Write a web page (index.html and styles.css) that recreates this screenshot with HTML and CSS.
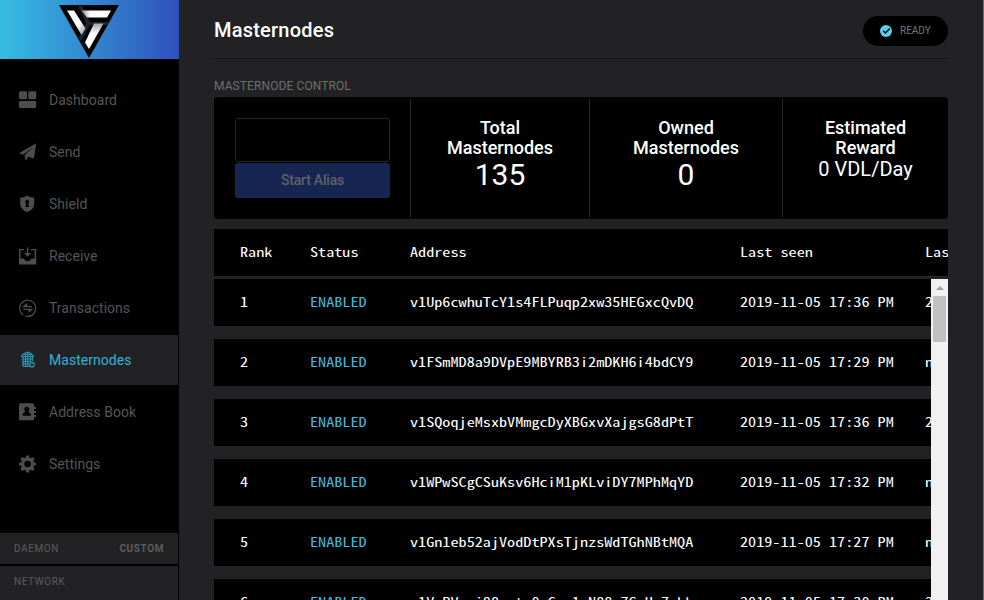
FILE: index.html
```html
<!DOCTYPE html>
<html lang="en">
<head>
<meta charset="utf-8">
<title>Masternodes</title>
<link rel="stylesheet" href="styles.css">
</head>
<body>
<div class="app">
  <aside class="sidebar">
    <div class="brand">
      <svg width="60" height="54" viewBox="0 0 60 54">
        <defs>
          <linearGradient id="g1" x1="0" y1="0" x2="1" y2="1"><stop offset=".6" stop-color="#fff"/><stop offset="1" stop-color="#8b8f98"/></linearGradient>
          <linearGradient id="g2" x1="0" y1="0" x2="1" y2="0"><stop offset="0" stop-color="#8b8f98"/><stop offset=".3" stop-color="#fff"/></linearGradient>
          <linearGradient id="g3" x1="0" y1="1" x2="0" y2="0"><stop offset=".6" stop-color="#fff"/><stop offset="1" stop-color="#a0a3aa"/></linearGradient>
        </defs>
        <path d="M0 0H60L30 53Z" fill="#030304"/>
        <path d="M19 1H23L31 17H50L48 20H31L22 36L20 32L27 18Z" fill="#20222c"/>
        <path d="M8 5.500H15L26.500 23.500L22.500 30Z" fill="url(#g1)"/>
        <path d="M22.500 5.500H52L48 12.500H28Z" fill="url(#g2)"/>
        <path d="M35 18.500H44.500L30 44L26 37.500Z" fill="url(#g3)"/>
      </svg>
    </div>
    <nav class="nav">
      <a class="item"><svg class="ico" viewBox="0 0 18 18"><rect x="0" y=".3" width="8" height="8" rx="1.300"/><rect x="9.200" y=".3" width="8" height="8" rx="1.300"/><rect x="0" y="10" width="17.200" height="7" rx="1.300"/></svg>Dashboard</a>
      <a class="item"><svg class="ico" viewBox="0 0 18 18"><path d="M17.300 .3L14.800 15.500L9.400 13.500L6.600 17.700L5.600 12.300L14.500 3.800L4.200 11.700L0 10.300Z"/></svg>Send</a>
      <a class="item"><svg class="ico" viewBox="0 0 18 18"><path fill-rule="evenodd" d="M8.200 .7C10.500 2 12.800 2.500 15.200 2.500V8.500C15.200 12.800 12.500 15.500 8.200 17C4 15.500 1.200 12.800 1.200 8.500V2.500C3.600 2.500 5.900 2 8.200 .7ZM8.200 4.800A2 2 0 0 0 7 8.400L6.500 12H9.900L9.400 8.400A2 2 0 0 0 8.200 4.800Z"/></svg>Shield</a>
      <a class="item"><svg class="ico" viewBox="0 0 18 18"><path d="M0 2H5V3.300H1.500V11.500H5.200C5.200 15 12 15 12 11.500H15.700V3.300H12V2H17.200V17.500H0Z"/><path d="M7.900 .5H9.300V6H12.200L8.600 9.800L5 6H7.900Z"/></svg>Receive</a>
      <a class="item"><svg class="ico line" viewBox="0 0 18 18"><path d="M4.500 16A8 8 0 1 1 9 17.200M14.800 14.800A8 8 0 0 1 6 17" stroke-width="1.200"/><path d="M13 7.700H4.300L7.400 5.200V7.700M4.300 10.300H13L10 12.800V10.300" stroke-width="1.200"/></svg>Transactions</a>
      <a class="item active"><svg class="ico line" viewBox="0 0 18 18"><path d="M2.500 5L5 2.500L8.500 1.200L12 2.500L14.500 5M2 5.500H15M4 3.500H13M4 5V15.500M6.500 4V16M8.700 1V16M11.300 4V11M13.500 5V10M3 8H14M3 10.500H12M3 13H10M4 15.500H11" stroke-width="1.200"/><circle cx="13" cy="13.700" r="2.200" stroke-width="1.300"/></svg>Masternodes</a>
      <a class="item"><svg class="ico" viewBox="0 0 18 18"><path fill-rule="evenodd" d="M1.500 .3H13.500Q15 .3 15 2V16Q15 17.300 13.500 17.300H1.500Q0 17.300 0 16V2Q0 .3 1.500 .3ZM7.800 3.700A2.400 2.400 0 0 0 6.100 8L5.800 9.200C4.300 9.700 3.500 10.600 3.500 12.800H12C12 10.600 11.300 9.700 9.800 9.200L9.500 8A2.400 2.400 0 0 0 7.800 3.700Z"/><path d="M15 4H17V6H15ZM15 8H17V10H15ZM15 12H17V14H15Z"/></svg>Address Book</a>
      <a class="item"><svg class="ico" viewBox="0 0 18 18"><path fill-rule="evenodd" d="M7.200 .5H9.900L10.400 2.800L11.700 3.300L13.900 1.900L15.700 3.900L14.300 6L14.800 7.300L17.100 7.800V10.200L14.800 10.700L14.300 12L15.700 14.100L13.900 16L11.700 14.700L10.400 15.200L9.900 17.500H7.200L6.700 15.200L5.400 14.700L3.300 16L1.500 14.100L2.800 12L2.300 10.700L0 10.200V7.800L2.300 7.300L2.800 6L1.400 3.900L3.200 1.900L5.400 3.300L6.700 2.800ZM8.600 5.700A3.300 3.300 0 1 0 8.600 12.300A3.300 3.300 0 1 0 8.600 5.700Z"/></svg>Settings</a>
    </nav>
    <div class="status"><span>DAEMON</span><b>CUSTOM</b></div>
    <div class="status last"><span>NETWORK</span></div>
  </aside>
  <main class="main">
    <header class="top">
      <h1>Masternodes</h1>
      <div class="ready"><svg width="12" height="12" viewBox="0 0 12 12"><circle cx="6" cy="6" r="6" fill="#5bcdf0"/><path d="M3.300 5.900L5.400 8L9.800 3.400" fill="none" stroke="#000" stroke-width="1.500"/></svg>READY</div>
    </header>
    <h2>MASTERNODE CONTROL</h2>
    <section class="stats">
      <div class="control"><input class="alias" type="text"><button class="start">Start Alias</button></div>
      <div class="stat"><h3>Total<br>Masternodes</h3><p class="num">135</p></div>
      <div class="stat"><h3>Owned<br>Masternodes</h3><p class="num">0</p></div>
      <div class="stat"><h3>Estimated<br>Reward</h3><p class="reward">0 VDL/Day</p></div>
    </section>
    <div class="row head"><span>Rank</span><span>Status</span><span>Address</span><span>Last seen</span><span>Las</span></div>
    <div class="list">
      <div class="rows">
        <div class="row"><span>1</span><span class="on">ENABLED</span><span>v1Up6cwhuTcY1s4FLPuqp2xw35HEGxcQvDQ</span><span>2019-11-05 17:36 PM</span><span>2</span></div>
        <div class="row"><span>2</span><span class="on">ENABLED</span><span>v1FSmMD8a9DVpE9MBYRB3i2mDKH6i4bdCY9</span><span>2019-11-05 17:29 PM</span><span>n</span></div>
        <div class="row"><span>3</span><span class="on">ENABLED</span><span>v1SQoqjeMsxbVMmgcDyXBGxvXajgsG8dPtT</span><span>2019-11-05 17:36 PM</span><span>2</span></div>
        <div class="row"><span>4</span><span class="on">ENABLED</span><span>v1WPwSCgCSuKsv6HciM1pKLviDY7MPhMqYD</span><span>2019-11-05 17:32 PM</span><span>n</span></div>
        <div class="row"><span>5</span><span class="on">ENABLED</span><span>v1Gn1eb52ajVodDtPXsTjnzsWdTGhNBtMQA</span><span>2019-11-05 17:27 PM</span><span>n</span></div>
        <div class="row"><span>6</span><span class="on">ENABLED</span><span>v1VaPVmsj88sste0sCaz1eN88z7GzHa7akk</span><span>2019-11-05 17:30 PM</span><span>2</span></div>
      </div>
      <div class="scroll"><i class="up"></i><i class="thumb"></i></div>
    </div>
  </main>
</div>
</body>
</html>
```
FILE: styles.css
```css
* { box-sizing: border-box; margin: 0; padding: 0; }
body { width: 984px; height: 600px; overflow: hidden; background: #222224; color: #fff; font-family: Roboto, sans-serif; }
.app { display: flex; height: 600px; }
.sidebar { flex: none; width: 179px; height: 600px; background: #000; display: flex; flex-direction: column; }
.brand { height: 59px; padding-top: 5px; display: flex; justify-content: center; padding-right: 1px; background: linear-gradient(90deg, #36bde2, #2f51bd); }
.nav { padding-top: 16px; flex: 1; }
.item { display: flex; align-items: center; width: 178px; height: 50px; margin-bottom: 2px; padding-left: 19px; gap: 12px; font-size: 14px; color: #555; letter-spacing: .03px; }
.item.active { background: #222224; color: #32b4da; }
.ico { width: 18px; height: 18px; fill: #4d4d4d; flex: none; }
.ico.line { fill: none; stroke: #4d4d4d; }
.active .ico.line { stroke: #2794b6; }
.status { width: 178px; height: 31px; margin-bottom: 2px; padding: 0 14px 0 14px; background: #222224; display: flex; align-items: center; justify-content: space-between; font-size: 10px; letter-spacing: .6px; color: #5d5d5f; }
.status.last { height: 34px; margin-bottom: 0; padding-bottom: 3px; }
.main { flex: 1; min-width: 0; padding: 0 35px; border-right: 1px solid #68706f; }
.top { height: 59px; border-bottom: 1px solid #19191b; display: flex; justify-content: space-between; align-items: center; padding-top: 3px; }
h1 { font-size: 20px; font-weight: 500; letter-spacing: .22px; line-height: 24px; margin-bottom: 2px; }
.ready { width: 85px; height: 30px; border-radius: 15px; background: #000; display: flex; align-items: center; padding-left: 17px; gap: 8px; font-size: 10px; color: #777; }
h2 { font-size: 12px; font-weight: 400; color: #6f6f71; line-height: 14px; margin-top: 20px; letter-spacing: .1px; }
.stats { margin-top: 4px; height: 122px; padding: 1px 0; background: #000; border-radius: 4px; display: grid; grid-template-columns: 196px 179px 193px 1fr; }
.control { padding: 20px 20px 0 21px; display: flex; flex-direction: column; gap: 1px; }
.alias { height: 44px; background: #000; border: 1px solid #242426; border-radius: 3px; }
.start { height: 35px; padding-bottom: 1px; background: #162552; border: 0; border-radius: 3px; color: #606268; font: 500 14px Roboto, sans-serif; letter-spacing: -.2px; }
.stat { border-left: 1px solid #252527; padding-top: 20px; text-align: center; }
h3 { font-size: 18px; line-height: 20px; font-weight: 500; }
.num { font-size: 30px; line-height: 34px; }
.reward { font-size: 20px; line-height: 23px; }
.row { display: grid; grid-template-columns: 70px 100px 330px 185px 100px; height: 47px; padding: 0 0 3px 26px; align-items: center; overflow: hidden; background: #000; white-space: nowrap; font-family: "Noto Sans Mono CJK SC", "Liberation Mono", monospace; font-size: 16.200px; line-height: 20px; }
/* Flattens the narrow mono face to the proportions of a regular-width one. */
.row span { transform: scaleY(.79); }
.head { margin-top: 10px; margin-bottom: 3px; }
.row .on { color: #3fb9de; }
.list { display: flex; height: 321px; overflow: hidden; }
.rows { flex: 1; min-width: 0; display: flex; flex-direction: column; gap: 13px; }
.rows .row { flex: none; }
.scroll { flex: none; width: 17px; background: #f1f1f1; display: flex; flex-direction: column; align-items: center; }
.up { border: 4px solid transparent; border-top: 0; border-bottom-color: #a3a3a3; margin: 7px 0 6px; }
.thumb { width: 13px; height: 46px; background: #c1c1c1; }
```
